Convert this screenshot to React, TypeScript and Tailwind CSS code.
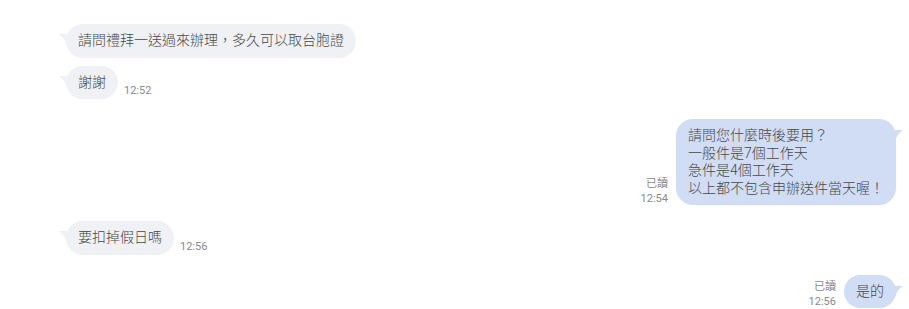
import React from "react";

const FONT = { fontFamily: '"Roboto", "Noto Sans CJK TC", sans-serif' };

function LeftTail() {
  return (
    <svg className="absolute left-[-7px] top-[10px]" width="8" height="11" viewBox="0 0 8 11">
      <path d="M8 0 L0 0 C3 2 6 5 8 11 Z" fill="#f0f1f4" />
    </svg>
  );
}

function RightTail() {
  return (
    <svg className="absolute right-[-7px] top-[11px]" width="8" height="11" viewBox="0 0 8 11">
      <path d="M0 0 L8 0 C5 2 2 5 0 11 Z" fill="#d1ddf5" />
    </svg>
  );
}

function Left({ text, time, className = "" }: { text: string; time?: string; className?: string }) {
  return (
    <div className={`flex items-end pl-[66px] ${className}`}>
      <div className="relative rounded-[17px] bg-[#f0f1f4] px-[12px] py-[8px] text-[14px] leading-[17.5px] font-light text-[#474747]">
        <LeftTail />
        {text}
      </div>
      {time && <div className="ml-[6px] mb-[1px] text-[11px] leading-[14px] text-[#8a8a8a]">{time}</div>}
    </div>
  );
}

function Right({ lines, time, className = "" }: { lines: string[]; time: string; className?: string }) {
  return (
    <div className={`flex items-end justify-end pr-[13px] ${className}`}>
      <div className="mr-[8px] mb-[-1px] text-right text-[11px] leading-[15px] text-[#8a8a8a]">
        <div>已讀</div>
        <div>{time}</div>
      </div>
      <div className="relative rounded-[17px] bg-[#d1ddf5] px-[12px] py-[8px] text-[14px] leading-[17.5px] font-light text-[#474747]">
        <RightTail />
        {lines.map((l, i) => (
          <div key={i}>{l}</div>
        ))}
      </div>
    </div>
  );
}

export default function App() {
  return (
    <div className="w-[909px] h-[309px] overflow-hidden bg-white pt-[24px] flex flex-col" style={FONT}>
      <Left text="請問禮拜一送過來辦理，多久可以取台胞證" />
      <Left text="謝謝" time="12:52" className="mt-[8px]" />
      <Right
        className="mt-[20px]"
        time="12:54"
        lines={["請問您什麼時後要用？", "一般件是7個工作天", "急件是4個工作天", "以上都不包含申辦送件當天喔！"]}
      />
      <Left text="要扣掉假日嗎" time="12:56" className="mt-[16px]" />
      <Right className="mt-[20px]" time="12:56" lines={["是的"]} />
    </div>
  );
}
